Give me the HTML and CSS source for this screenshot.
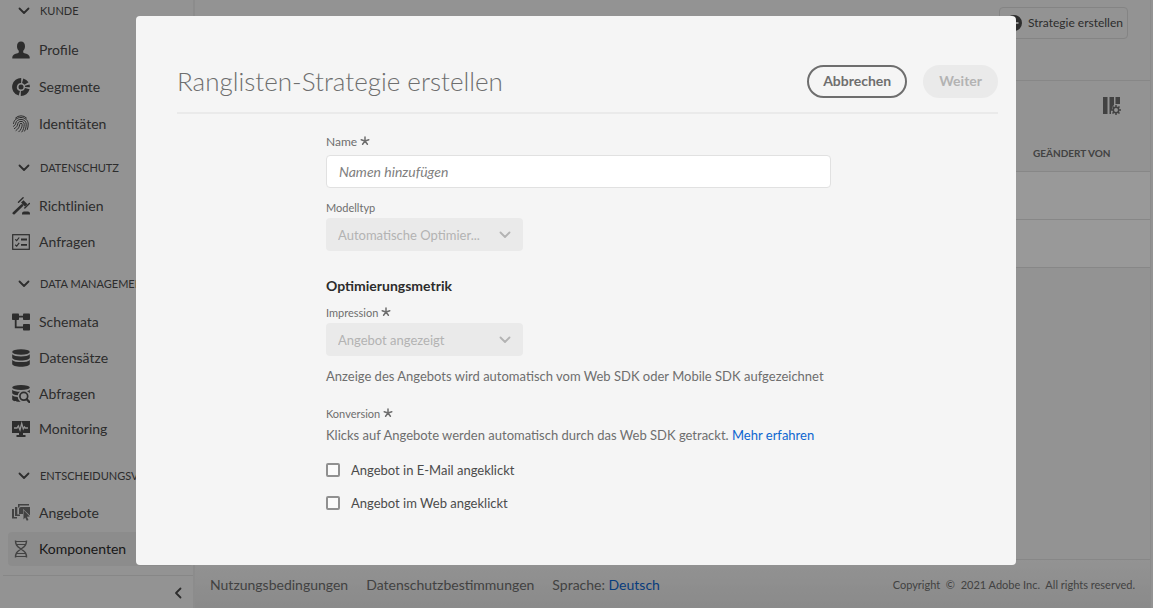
FILE: index.html
```html
<!DOCTYPE html>
<html lang="de">
<head>
<meta charset="utf-8">
<meta name="viewport" content="width=device-width, initial-scale=1">
<title>Ranglisten-Strategie erstellen</title>
<link rel="stylesheet" href="styles.css">
</head>
<body>
<svg class="sprite" aria-hidden="true">
  <symbol id="chevron" viewBox="0 0 12 8"><path d="M1.500 1.500 6 6l4.500-4.500" fill="none" stroke="currentColor" stroke-width="1.800" stroke-linecap="round" stroke-linejoin="round"/></symbol>
  <symbol id="star" viewBox="0 0 10 10"><path d="M5 5V1M5 5l3.800-1.200M5 5l2.400 3.300M5 5 2.600 8.300M5 5 1.200 3.800" fill="none" stroke="currentColor" stroke-width="1.500" stroke-linecap="round"/></symbol>
</svg>
<div class="app">
  <aside class="sidebar">
    <nav class="nav">
      <section class="group">
        <button class="group-title" type="button"><svg class="chevron"><use href="#chevron"/></svg>Kunde</button>
        <a class="item" href="#"><svg class="icon" viewBox="0 0 18 18"><path d="M9 .5c2.500 0 4 1.900 4 4.700 0 2-.8 3.600-1.800 4.600v1.300c0 .6.500.9 1.200 1.100 2.700.7 5.100 1.700 5.300 3.800v1.500H.3V16c.2-2.100 2.600-3.100 5.300-3.800.7-.2 1.200-.5 1.200-1.100V9.800C5.800 8.800 5 7.200 5 5.200 5 2.400 6.500.5 9 .5z"/></svg>Profile</a>
        <a class="item" href="#"><svg class="icon" viewBox="0 0 18 18"><circle cx="9" cy="9" r="6.500" fill="none" stroke="currentColor" stroke-width="4.800" pathLength="100" stroke-dasharray="21 4 46 4 12 4 5 4" transform="rotate(15 9 9)"/><circle cx="9" cy="9" r="2.500"/></svg>Segmente</a>
        <a class="item" href="#"><svg class="icon" viewBox="0 0 18 18"><g fill="none" stroke="currentColor" stroke-width="1" stroke-linecap="round"><path d="M3.500 3A7.600 7.600 0 0 1 14.500 3M1.500 8.500C1.800 5 5 2.500 9 2.500s7.200 2.800 7.200 6.500c0 2.200-.3 4-.9 5.500M1.500 11.300c1.500-.8 2-1.800 2.200-3C4.200 5.800 6.300 4.400 9 4.400c3 0 5.200 2 5.200 4.800 0 2.800-.5 5-1.600 6.900M2.400 13.600c2.200-1.200 3.100-2.900 3.400-4.900.3-1.500 1.600-2.300 3.200-2.300 2 0 3.300 1.200 3.200 3-.1 3-.8 5.500-2.300 7.500M4 15.500c2.300-1.600 3.500-3.500 3.700-6 .1-.8.600-1.200 1.300-1.200.8 0 1.300.5 1.200 1.400-.2 3-1.400 5.400-3.400 7.100"/></g></svg>Identitäten</a>
      </section>
      <section class="group compact">
        <button class="group-title" type="button"><svg class="chevron"><use href="#chevron"/></svg>Datenschutz</button>
        <a class="item" href="#"><svg class="icon" viewBox="0 0 18 18"><g fill="none" stroke="currentColor" stroke-linecap="round"><path d="M1.800 16.200 10 8.400" stroke-width="2.600"/><path d="m6.500 5.300 4.600-4.500M12.800 11 17.400 6.500" stroke-width="1.400"/><path d="m9 5.500 2.500-2.300 4 4-2.600 2.300z" fill="currentColor" stroke="none"/></g><path d="M10 17.500v-1c0-1.200 1-2 2-2h4c1 0 2 .8 2 2v1z"/></svg>Richtlinien</a>
        <a class="item" href="#"><svg class="icon" viewBox="0 0 18 18"><g fill="none" stroke="currentColor"><rect x=".7" y="1.700" width="16.600" height="14.600" stroke-width="1.200"/><path d="M3.200 6.400 4.700 7.700 7.200 4.500M3.200 11.800l1.500 1.300 2.500-3.200" stroke-width="1.200"/><path d="M9 6.500h6M9 11.800h6" stroke-width="1.800"/></g></svg>Anfragen</a>
      </section>
      <section class="group compact data">
        <button class="group-title" type="button"><svg class="chevron"><use href="#chevron"/></svg>Data Management</button>
        <a class="item" href="#"><svg class="icon" viewBox="0 0 18 18"><rect x="0" y=".5" width="7" height="6.500" rx=".8"/><rect x="11" y=".5" width="7" height="6.500" rx=".8"/><rect x="11" y="11" width="7" height="6.500" rx=".8"/><path d="M6 3.700h6M3.700 6v8.400H12" fill="none" stroke="currentColor" stroke-width="1.800"/></svg>Schemata</a>
        <a class="item" href="#"><svg class="icon" viewBox="0 0 18 18"><ellipse cx="9" cy="3" rx="8.800" ry="2.700"/><path d="M.2 5.300C1.500 7 5 7.500 9 7.500s7.500-.5 8.800-2.200v3.500c0 1.600-4 2.700-8.800 2.700S.2 10.400.2 8.800z"/><path d="M.2 11C1.500 12.600 5 13.100 9 13.100s7.500-.5 8.800-2.100v3.900c0 1.600-4 2.800-8.800 2.800S.2 16.500.2 14.900z"/></svg>Datensätze</a>
        <a class="item" href="#"><svg class="icon" viewBox="0 0 18 18"><ellipse cx="9" cy="2.600" rx="8.800" ry="2.500"/><path d="M.2 4.700C1.500 6.200 5 6.700 8 6.700c-1.300 1-2 2-2.200 3.500C2.500 10 .2 9.200.2 8zM17.800 4.700v3.500c-.8-1.200-1.800-1.700-3-2 1.300-.3 2.300-.8 3-1.500zM.2 10.300c1 1 3 1.500 5.500 1.700.2 2 1.300 3.800 3 4.700-4.700.2-8.500-.8-8.500-2.500z"/><circle cx="11.800" cy="11.300" r="3.900" fill="none" stroke="currentColor" stroke-width="1.700"/><path d="m14.700 14.300 3 3" stroke="currentColor" stroke-width="2.300" stroke-linecap="round"/></svg>Abfragen</a>
        <a class="item" href="#"><svg class="icon" viewBox="0 0 18 18"><path d="M0 1h18v12h-7v2h2.500v2h-9v-2H7v-2H0z"/><path class="cutout" d="M2 8h3l1.300-2 1.700 4 1.700-6.500L11.300 9l1.200-2 .8 1H16" fill="none" stroke-width="1.300"/></svg>Monitoring</a>
      </section>
      <section class="group decisions">
        <button class="group-title" type="button"><svg class="chevron"><use href="#chevron"/></svg>Entscheidungsverwaltung</button>
        <a class="item" href="#"><svg class="icon soft" viewBox="0 0 18 18"><path d="M0 5h2v8h3v1.500H0zM3 3h2.300v7.500H8V12H3zM6 0h11v1.500H7.500v2H6zM7 4.500V10h4V5l7 6.500V3H8.500z"/><path d="m11.500 6 6.300 6.500-2.900.3 1.600 3.200-1.700.8-1.600-3.200-1.700 2z"/></svg>Angebote</a>
        <a class="item active" href="#" aria-current="page"><svg class="icon soft" viewBox="0 0 18 18"><g fill="none" stroke="currentColor" stroke-width="1.500"><path d="M3.500.5c0 4 1 5.500 5.500 8.500s5.500 4.500 5.500 8.500M14.500.5c0 4-1 5.500-5.500 8.500s-5.500 4.500-5.500 8.500"/><path d="M3.500 1.500h11M5 4.500h8M5 13.500h8M3.500 16.500h11" stroke-width="1.200"/></g></svg>Komponenten</a>
      </section>
    </nav>
    <div class="sidebar-foot"><button class="collapse" type="button" aria-label="Seitenleiste einklappen"><svg class="chevron"><use href="#chevron"/></svg></button></div>
  </aside>
  <main class="main">
    <header class="topbar">
      <button class="create" type="button"><svg viewBox="0 0 16 16" class="plus"><path fill-rule="evenodd" d="M8 0a8 8 0 1 1 0 16A8 8 0 0 1 8 0zM7 3.500V7H3.500v2H7v3.500h2V9h3.500V7H9V3.500z"/></svg>Strategie erstellen</button>
    </header>
    <div class="toolbar">
      <button class="columns" type="button" aria-label="Spalten konfigurieren"><svg class="icon" viewBox="0 0 18 18"><path d="M0 0h4.500v17H0zM6.500 0H11v8l-2 2 .5 2L8 13.500V17H6.500zM12.500 0H17v7h-4.500z"/><circle cx="13" cy="13" r="2.700" fill="none" stroke="currentColor" stroke-width="1.500"/><path d="M13 8v2M13 16v2M8 13h2M16 13h2M9.500 9.500l1.400 1.400M15.100 15.100l1.400 1.400M16.500 9.500l-1.400 1.400M10.900 15.100l-1.400 1.400" stroke="currentColor" stroke-width="1.500"/></svg></button>
    </div>
    <table class="list">
      <thead><tr><td></td><th scope="col">Geändert von</th></tr></thead>
      <tbody><tr><td></td><td></td></tr><tr><td></td><td></td></tr></tbody>
    </table>
    <footer class="footer">
      <a href="#">Nutzungsbedingungen</a>
      <a href="#">Datenschutzbestimmungen</a>
      <span>Sprache: <a class="link" href="#">Deutsch</a></span>
      <small>Copyright &nbsp;©&nbsp; 2021 Adobe Inc.&nbsp; All rights reserved.</small>
    </footer>
  </main>
</div>
<div class="overlay">
  <div class="modal" role="dialog" aria-modal="true" aria-labelledby="title">
    <header class="modal-head">
      <h1 id="title">Ranglisten-Strategie erstellen</h1>
      <button class="pill" type="button">Abbrechen</button>
      <button class="pill" type="button" disabled>Weiter</button>
    </header>
    <form class="form">
      <div class="field name">
        <label for="name">Name <svg class="star"><use href="#star"/></svg></label>
        <input class="text" id="name" type="text" placeholder="Namen hinzufügen" required>
      </div>
      <div class="field">
        <label for="model">Modelltyp</label>
        <div class="picker"><select id="model" disabled><option>Automatische Optimier...</option></select><svg class="chevron"><use href="#chevron"/></svg></div>
      </div>
      <h2>Optimierungsmetrik</h2>
      <div class="field">
        <label for="impression">Impression <svg class="star"><use href="#star"/></svg></label>
        <div class="picker"><select id="impression" disabled><option>Angebot angezeigt</option></select><svg class="chevron"><use href="#chevron"/></svg></div>
      </div>
      <p class="hint">Anzeige des Angebots wird automatisch vom Web SDK oder Mobile SDK aufgezeichnet</p>
      <fieldset class="conversion">
        <legend>Konversion <svg class="star"><use href="#star"/></svg></legend>
        <p>Klicks auf Angebote werden automatisch durch das Web SDK getrackt. <a class="link" href="#">Mehr erfahren</a></p>
        <label class="check"><input type="checkbox">Angebot in E-Mail angeklickt</label>
        <label class="check"><input type="checkbox">Angebot im Web angeklickt</label>
      </fieldset>
    </form>
  </div>
</div>
</body>
</html>
```
FILE: styles.css
```css
* { box-sizing: border-box; }
body {
  margin: 0;
  background: #f5f5f5;
  color: #4b4b4b;
  font: 14px/20px Lato, "Noto Sans", sans-serif;
}
button, input, select { font: inherit; color: inherit; }
button { border: 0; background: none; padding: 0; }
a { color: inherit; text-decoration: none; }
svg { flex: none; }
.sprite { display: none; }
.icon { width: 18px; height: 18px; fill: currentColor; }
.icon.soft { color: #6e6e6e; }
.cutout { stroke: #f5f5f5; }
.chevron { width: 12px; height: 8px; }
.star { width: 10px; height: 10px; }
.link { color: #0d66d0; }

.app {
  display: grid;
  grid-template-columns: 195px 1fr;
  height: 100vh;
  overflow: hidden;
}
.sidebar {
  display: flex;
  flex-direction: column;
  border-right: 2px solid #eaeaea;
  overflow: hidden;
}
.nav { flex: 1; margin-top: -9px; padding-left: 8px; }
.group { margin-bottom: 6px; }
.group.compact { margin-bottom: 3px; }
.group.data { margin-bottom: 11px; }
.group-title {
  display: flex;
  align-items: center;
  gap: 10px;
  height: 40px;
  padding-left: 10px;
  font-size: 11px;
  text-transform: uppercase;
  white-space: nowrap;
}
.item {
  display: flex;
  align-items: center;
  gap: 9px;
  height: 37px;
  padding-left: 4px;
}
.compact .item { height: 36px; }
.data .group-title { height: 41px; }
.data .item:last-child { height: 33px; }
.decisions .item { height: 34px; }
.decisions .item.active { margin-top: 2px; border-radius: 4px; background: #eaeaea; color: #2c2c2c; }
.sidebar-foot {
  display: flex;
  justify-content: flex-end;
  height: 33px;
  margin-left: 3px;
  border-top: 1px solid #e1e1e1;
}
.collapse { width: 30px; }
.collapse .chevron { transform: rotate(90deg); }

.main {
  display: flex;
  flex-direction: column;
  margin-right: 2px;
  border-right: 1px solid #eaeaea;
}
.topbar {
  display: flex;
  justify-content: flex-end;
  align-items: flex-start;
  height: 81px;
  padding: 7px 22px 0 0;
  border-bottom: 1px solid #e1e1e1;
}
.create {
  display: flex;
  align-items: center;
  gap: 6px;
  height: 32px;
  padding: 0 4px 0 6px;
  border: 1px solid #dcdcdc;
  border-radius: 4px;
  font-size: 12px;
}
.plus { width: 16px; height: 16px; fill: currentColor; }
.toolbar {
  display: flex;
  justify-content: flex-end;
  align-items: center;
  height: 50px;
  padding-right: 29px;
}
.columns { display: flex; color: #6e6e6e; }
.list { width: 100%; border-collapse: collapse; }
.list th {
  width: 117px;
  height: 40px;
  padding: 5px 0 0;
  color: #6e6e6e;
  font-size: 10px;
  text-align: left;
  text-transform: uppercase;
}
.list tbody td { height: 48px; padding: 0; border: solid #e1e1e1; border-width: 1px 0; background: #fff; }
.footer {
  display: flex;
  align-items: center;
  gap: 18px;
  height: 49px;
  margin-top: auto;
  padding: 2px 15px 0;
  border-top: 1px solid #e1e1e1;
  background: linear-gradient(#f5f5f5, #e6e6e6);
  color: #6e6e6e;
}
.footer small { margin-left: auto; font-size: 11px; }

.overlay {
  position: fixed;
  inset: 0;
  display: flex;
  justify-content: center;
  align-items: flex-start;
  padding: 16px 17px 16px 16px;
  background: rgba(0, 0, 0, .4);
}
.modal {
  width: 100%;
  max-width: 880px;
  padding: 49px 18px 52px 41px;
  border-radius: 4px;
  background: #f5f5f5;
}
.modal-head {
  display: flex;
  align-items: center;
  padding-bottom: 14px;
  border-bottom: 2px solid #eaeaea;
}
h1 {
  flex: 1;
  margin: 0;
  color: #6e6e6e;
  font-size: 26px;
  font-weight: 300;
  line-height: 33px;
}
.pill {
  height: 33px;
  padding: 0 14px 2px;
  border: 2px solid #6e6e6e;
  border-radius: 17px;
  color: #6e6e6e;
  font-weight: 700;
}
.pill + .pill { margin-left: 16px; }
.pill:disabled { border-color: #eaeaea; background: #eaeaea; color: #b3b3b3; }

.form { max-width: 505px; margin-left: 149px; padding-top: 20px; color: #6e6e6e; font-size: 13px; }
.field { display: flex; flex-direction: column; gap: 2px; }
.field.name { gap: 5px; margin-bottom: 12px; }
.field > label, legend { padding: 0; font-size: 11px; line-height: 16px; }
.field.name > label { font-size: 12px; }
.text {
  width: 100%;
  height: 33px;
  padding: 0 12px;
  border: 1px solid #e1e1e1;
  border-radius: 4px;
  background: #fff;
  font-size: 14px;
}
.text::placeholder { color: #808080; font-style: italic; opacity: 1; }
.picker { display: grid; align-items: center; width: 197px; color: #b3b3b3; }
.picker > * { grid-area: 1 / 1; }
.picker select {
  appearance: none;
  width: 100%;
  height: 33px;
  padding: 0 30px 0 12px;
  border: 0;
  border-radius: 4px;
  background: #eaeaea;
  color: #b3b3b3;
  opacity: 1;
}
.picker .chevron { justify-self: end; margin-right: 12px; }
h2 { margin: 25px 0 9px; color: #2c2c2c; font-size: 14px; font-weight: 700; line-height: 20px; }
.hint { margin: 10px 0 20px; }
.conversion { margin: 0; padding: 0; border: 0; }
.conversion p { margin: 3px 0 15px; }
.check { display: flex; align-items: center; gap: 11px; color: #4b4b4b; }
.check + .check { margin-top: 13px; }
.check input {
  appearance: none;
  width: 14px;
  height: 14px;
  margin: 0;
  border: 2px solid #909090;
  border-radius: 2px;
  background: #fafafa;
}
```
